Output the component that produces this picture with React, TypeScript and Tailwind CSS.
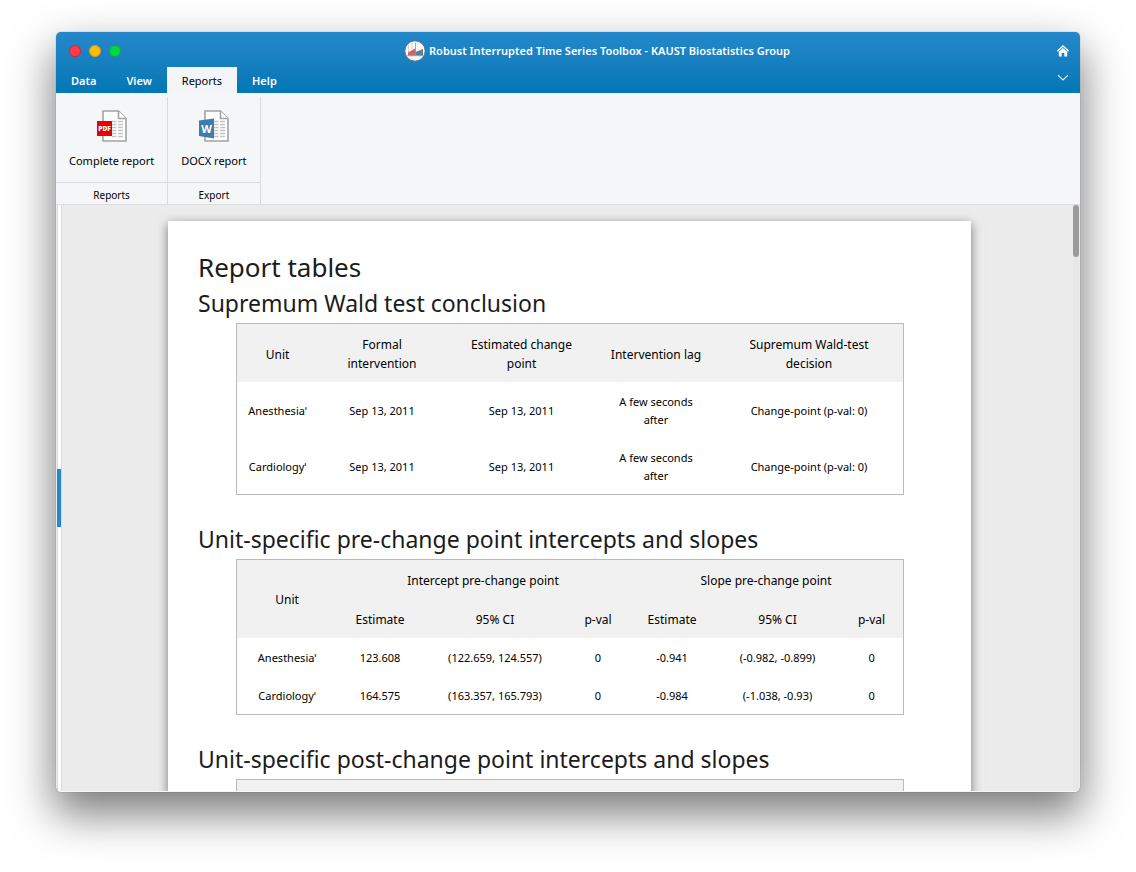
import type { ReactNode } from "react";

const tabs = ["Data", "View", "Reports", "Help"];

const conclusionColumns = [
  { label: "Unit", style: "w-[81px] px-5" },
  { label: "Formal intervention", style: "w-[128px] px-5" },
  { label: "Estimated change point", style: "w-[151px] px-5" },
  { label: "Intervention lag", style: "w-[118px] px-2" },
  { label: "Supremum Wald-test decision", style: "w-[188px] px-5" },
];

const conclusionRows = ["Anesthesia", "Cardiology"].map((unit) => [
  unit + "ˈ",
  "Sep 13, 2011",
  "Sep 13, 2011",
  "A few seconds after",
  "Change-point (p-val: 0)",
]);

const preChangeRows = [
  ["Anesthesiaˈ", "123.608", "(122.659, 124.557)", "0", "-0.941", "(-0.982, -0.899)", "0"],
  ["Cardiologyˈ", "164.575", "(163.357, 165.793)", "0", "-0.984", "(-1.038, -0.93)", "0"],
];

const slopeColumnWidths = [
  "w-[100px]",
  "w-[86px]",
  "w-[144px]",
  "w-[62px]",
  "w-[86px]",
  "w-[125px]",
  "w-[63px]",
];

function AppLogo() {
  return (
    <svg width="22" height="22" viewBox="0 0 22 22" aria-hidden="true">
      <circle cx="11" cy="11" r="10.2" fill="#fafafa" stroke="#5f7585" strokeWidth="1" />
      <path d="M4.5 4.5V15M8 3V9" stroke="#d9c3c6" strokeWidth="0.8" />
      <path d="M4 12.5L11.5 8.2V15.5H4Z" fill="#c4686c" />
      <path d="M11.5 12.6L19 9.6V15.5H11.5Z" fill="#4c86a6" />
      <path d="M11.5 2.5V15.5" stroke="#b7808a" strokeWidth="0.8" />
      <path d="M11.5 12.6L19 9.3" stroke="#a8505c" strokeWidth="0.8" />
      <path d="M2.5 15.7H19.5" stroke="#8c8f98" strokeWidth="0.8" />
    </svg>
  );
}

function DocumentIcon({ children }: { children: ReactNode }) {
  return (
    <svg width="32" height="34" viewBox="0 0 32 34" aria-hidden="true">
      <path d="M7 2H22.5L30 9.5V32H7Z" fill="#fff" stroke="#a2a2a2" strokeWidth="1.6" />
      <path d="M22.5 2V9.5H30" fill="#fff" stroke="#a2a2a2" strokeWidth="1.6" />
      <path
        d="M16 12.5H20.5M22 12.5H27M16 15.5H20.5M22 15.5H27M16 18.5H20.5M22 18.5H27M16 21.5H20.5M22 21.5H27M16 24.5H20.5M22 24.5H27M16 27.5H20.5M22 27.5H27"
        stroke="#c4c4c4"
        strokeWidth="1.6"
      />
      {children}
    </svg>
  );
}

function PdfIcon() {
  return (
    <DocumentIcon>
      <rect x="1" y="12" width="15" height="15" fill="#e80008" />
      <text
        x="8.5"
        y="22"
        textAnchor="middle"
        fontFamily="Open Sans, sans-serif"
        fontWeight="800"
        fontSize="6.6"
        fill="#fff"
      >
        PDF
      </text>
    </DocumentIcon>
  );
}

function WordIcon() {
  return (
    <DocumentIcon>
      <path d="M1 11.5L16 9.5V29.5L1 27Z" fill="#3f7cae" />
      <text
        x="8.5"
        y="23.5"
        textAnchor="middle"
        fontFamily="Open Sans, sans-serif"
        fontWeight="700"
        fontSize="11"
        fill="#fff"
      >
        W
      </text>
    </DocumentIcon>
  );
}

function HomeIcon() {
  return (
    <svg width="12" height="12" viewBox="0 0 12 12" aria-hidden="true">
      <path d="M0.4 6.2L6 1L11.6 6.2" fill="none" stroke="#fff" strokeWidth="1.4" />
      <path d="M1.8 6.8L6 3.1L10.2 6.8V11.5H7.3V8H4.7V11.5H1.8Z" fill="#fff" />
    </svg>
  );
}

function ChevronIcon() {
  return (
    <svg width="12" height="8" viewBox="0 0 12 8" aria-hidden="true">
      <path d="M1 1.2L6 6L11 1.2" fill="none" stroke="#fff" strokeWidth="1.1" />
    </svg>
  );
}

function RibbonGroup({ title, label, icon }: { title: string; label: string; icon: ReactNode }) {
  return (
    <section className="flex flex-col border-r border-[#d9dbde]">
      <button
        type="button"
        className="flex flex-1 flex-col items-center gap-2.5 px-[13px] pt-3 text-[11px] leading-4"
      >
        {icon}
        <span>{label}</span>
      </button>
      <h2 className="h-[22px] border-t border-[#d9dbde] pt-1 text-center text-[10px] leading-4">
        {title}
      </h2>
    </section>
  );
}

function SlopeTable({ phase, rows }: { phase: string; rows: string[][] }) {
  return (
    <table className="w-full table-fixed border-separate border-spacing-0 border border-[#b9bbbf] text-center">
      <colgroup>
        {slopeColumnWidths.map((width, i) => (
          <col key={i} className={width} />
        ))}
      </colgroup>
      <thead className="bg-[#f1f1f1] text-xs">
        <tr className="h-[39px]">
          <th rowSpan={2} className="pt-[2px] font-normal">Unit</th>
          <th colSpan={3} className="pt-[2px] font-normal">Intercept {phase} point</th>
          <th colSpan={3} className="pt-[2px] font-normal">Slope {phase} point</th>
        </tr>
        <tr className="h-[39px]">
          {["Estimate", "95% CI", "p-val", "Estimate", "95% CI", "p-val"].map((label, i) => (
            <th key={i} className="pt-[2px] font-normal">{label}</th>
          ))}
        </tr>
      </thead>
      <tbody className="text-[11px]">
        {rows.map((row) => (
          <tr key={row[0]} className="h-[38px]">
            {row.map((cell, i) => (
              <td key={i} className="pt-[2px]">{cell}</td>
            ))}
          </tr>
        ))}
      </tbody>
    </table>
  );
}

export default function App() {
  return (
    <div className="flex h-screen flex-col bg-white px-14 pt-8 pb-20 font-['Noto_Sans','Open_Sans',sans-serif] text-black">
      <div className="flex min-h-0 flex-1 flex-col overflow-hidden rounded-[5px] bg-[#ececec] shadow-[0_0_1px_rgba(0,0,0,0.5),0_20px_44px_2px_rgba(0,0,0,0.52)]">
        <header className="bg-linear-to-b from-[#2488cb] to-[#0077b5] text-white">
          <div className="grid h-[35px] grid-cols-[1fr_auto_1fr] items-center px-3 pt-[2px]">
            <div className="flex gap-2 pl-px">
              <button type="button" aria-label="Close" className="size-3 rounded-full border border-[#e0202c] bg-[#ff3b47]" />
              <button type="button" aria-label="Minimize" className="size-3 rounded-full border border-[#dd9f10] bg-[#ffbd00]" />
              <button type="button" aria-label="Zoom" className="size-3 rounded-full border border-[#0fae38] bg-[#00d742]" />
            </div>
            <h1 className="flex items-center gap-[3px] pl-[58px] text-[11px] font-semibold">
              <AppLogo />
              <span className="pt-[2px]">
                Robust Interrupted Time Series Toolbox - KAUST Biostatistics Group
              </span>
            </h1>
            <a href="#home" aria-label="Home" className="-mr-px justify-self-end">
              <HomeIcon />
            </a>
          </div>
          <div className="flex h-[26px] justify-between pr-[11px]">
            <nav className="flex text-[11px]">
              {tabs.map((tab) => (
                <button
                  key={tab}
                  type="button"
                  className={
                    tab === "Reports"
                      ? "bg-[#f4f5f8] px-[15px] pt-[2px] text-black"
                      : "px-[15px] pt-[2px] font-semibold"
                  }
                >
                  {tab}
                </button>
              ))}
            </nav>
            <button type="button" aria-label="Collapse ribbon" className="pb-1">
              <ChevronIcon />
            </button>
          </div>
        </header>

        <div className="flex h-28 shrink-0 border-b border-[#d9dbde] bg-[#f4f6f8] pt-1">
          <RibbonGroup title="Reports" label="Complete report" icon={<PdfIcon />} />
          <RibbonGroup title="Export" label="DOCX report" icon={<WordIcon />} />
        </div>

        <div className="flex min-h-0 flex-1 border-b border-[#f8f8f8]">
          <div className="ml-px flex w-1 items-center bg-linear-to-r from-[#dadada] from-25% via-white via-25% to-white">
            <div className="h-[58px] w-1 bg-[#2488cb]" />
          </div>
          <main className="min-w-0 flex-1 overflow-hidden border-l border-[#dadada] px-[102px] pt-4">
            <article className="ml-1 min-h-full bg-white px-[30px] pt-7 text-[#1b1b1b] shadow-[0_3px_10px_rgba(0,0,0,0.5)]">
              <h2 className="text-[26px] leading-9">Report tables</h2>
              <h3 className="text-[23px] leading-9">Supremum Wald test conclusion</h3>
              <div className="pt-[2px] pr-[37px] pl-[38px] text-black">
                <table className="w-full table-fixed border-separate border-spacing-0 border border-[#b9bbbf] text-center">
                  <thead className="bg-[#f1f1f1] text-xs leading-[19px]">
                    <tr className="h-[58px]">
                      {conclusionColumns.map(({ label, style }) => (
                        <th key={label} className={`${style} pt-[2px] font-normal`}>
                          {label}
                        </th>
                      ))}
                    </tr>
                  </thead>
                  <tbody className="text-[11px] leading-[18px]">
                    {conclusionRows.map((row) => (
                      <tr key={row[0]} className="h-14">
                        {row.map((cell, i) => (
                          <td key={i} className={i === 3 ? "px-5 pt-[2px]" : "pt-[2px]"}>
                            {cell}
                          </td>
                        ))}
                      </tr>
                    ))}
                  </tbody>
                </table>
              </div>
              <h3 className="pt-[26px] text-[23px] leading-9">
                Unit-specific pre-change point intercepts and slopes
              </h3>
              <div className="pt-[2px] pr-[37px] pl-[38px] text-black">
                <SlopeTable phase="pre-change" rows={preChangeRows} />
              </div>
              <h3 className="pt-[26px] text-[23px] leading-9">
                Unit-specific post-change point intercepts and slopes
              </h3>
              <div className="pt-[2px] pr-[37px] pl-[38px]">
                <div className="h-20 border border-[#b9bbbf] bg-[#f1f1f1]" />
              </div>
            </article>
          </main>
          <div className="mr-px w-[6px] bg-[#e8e8e8]">
            <div className="h-[52px] rounded-[3px] bg-[#9b9b9b]" />
          </div>
        </div>
      </div>
    </div>
  );
}
